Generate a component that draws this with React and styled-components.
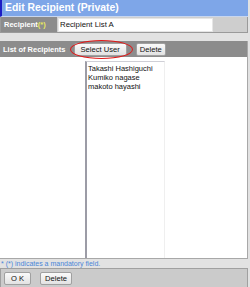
import React from "react";
import styled, { createGlobalStyle } from "styled-components";

const Global = createGlobalStyle`
  html, body {
    margin: 0;
    padding: 0;
    background: #e2e2e2;
  }
  body {
    font-family: "Liberation Sans", Arial, sans-serif;
  }
`;

const Page = styled.div`
  width: 250px;
  height: 287px;
  background: #e2e2e2;
  display: flex;
  flex-direction: column;
`;

const Panel = styled.div`
  width: 248px;
  display: flex;
  flex-direction: column;
`;

const TitleBar = styled.div`
  height: 16px;
  background: #7ea6e8;
  border-left: 2px solid #1c1cc4;
  border-bottom: 1px solid #c8d6ee;
  color: #fff;
  font-weight: bold;
  font-size: 10.4px;
  line-height: 16px;
  padding-left: 3px;
  white-space: nowrap;
`;

const FieldRow = styled.div`
  display: flex;
  height: 15px;
  border: 1px solid #9a9a9a;
  border-top: none;
  background: #cecece;
`;

const LabelCell = styled.div`
  width: 53px;
  background: #8c8c8c;
  color: #fff;
  font-weight: bold;
  font-size: 7.5px;
  line-height: 15px;
  padding-left: 3px;
  white-space: nowrap;
`;

const Mandatory = styled.span`
  color: #e8e860;
`;

const InputCell = styled.div`
  flex: 1;
  display: flex;
  align-items: center;
  padding-left: 1px;
`;

const TextInput = styled.div`
  width: 152px;
  height: 12px;
  background: #fff;
  border: 1px solid #e6e6e6;
  font-size: 7.8px;
  line-height: 12px;
  padding-left: 1px;
  color: #111;
  white-space: nowrap;
`;

const Spacer = styled.div`
  height: ${(p) => p.h}px;
`;

const Section = styled.div`
  display: flex;
  flex-direction: column;
  border-right: 1px solid #a8a8a8;
  border-bottom: 1px solid #a8a8a8;
`;

const SectionHeader = styled.div`
  height: 16px;
  background: #8c8c8c;
  display: flex;
  align-items: center;
  padding-left: 3px;
  gap: 8px;
`;

const HeaderLabel = styled.span`
  color: #fff;
  font-weight: bold;
  font-size: 7.5px;
  white-space: nowrap;
`;

const ButtonGroup = styled.div`
  display: flex;
  align-items: center;
  gap: 9px;
`;

const Highlight = styled.div`
  position: relative;
  display: flex;
  &::after {
    content: "";
    position: absolute;
    left: -4px;
    right: -6px;
    top: -3px;
    bottom: -3px;
    border: 1.5px solid #e01818;
    border-radius: 50%;
  }
`;

const Button = styled.button`
  height: 13px;
  padding: 0 ${(p) => p.px || 4}px;
  font-family: "Liberation Sans", Arial, sans-serif;
  font-size: 7.6px;
  line-height: 11px;
  color: #111;
  background: linear-gradient(#fafafa, #e2e2e2);
  border: 1px solid #a0a0a0;
  border-radius: 2px;
  white-space: nowrap;
`;

const SectionBody = styled.div`
  height: 197px;
  background: #fff;
  display: flex;
  padding-top: 4px;
  padding-left: 85px;
`;

const ListBox = styled.div`
  width: 76px;
  border-left: 2px solid #9c9ca6;
  border-top: 1px solid #cfcfd6;
  border-right: 1px solid #efefef;
  padding: 2px 0 0 1px;
  display: flex;
  flex-direction: column;
`;

const ListItem = styled.div`
  font-size: 7.5px;
  line-height: 9px;
  color: #111;
  white-space: nowrap;
`;

const Note = styled.div`
  height: 9px;
  font-size: 7px;
  line-height: 9px;
  color: #4a86d8;
  padding-left: 1px;
  white-space: nowrap;
`;

const ButtonBar = styled.div`
  height: 18px;
  background: #cbcbcb;
  border: 1px solid #a0a0a0;
  display: flex;
  align-items: center;
  padding-left: 3px;
  gap: 9px;
`;

const recipients = ["Takashi Hashiguchi", "Kumiko nagase", "makoto hayashi"];

export default function App() {
  return (
    <Page>
      <Global />
      <Panel>
        <TitleBar>Edit Recipient (Private)</TitleBar>
        <FieldRow>
          <LabelCell>
            Recipient<Mandatory>(*)</Mandatory>
          </LabelCell>
          <InputCell>
            <TextInput>Recipient List A</TextInput>
          </InputCell>
        </FieldRow>
        <Spacer h={8} />
        <Section>
          <SectionHeader>
            <HeaderLabel>List of Recipients</HeaderLabel>
            <ButtonGroup>
              <Highlight>
                <Button px={6}>Select User</Button>
              </Highlight>
              <Button px={3}>Delete</Button>
            </ButtonGroup>
          </SectionHeader>
          <SectionBody>
            <ListBox>
              {recipients.map((name) => (
                <ListItem key={name}>{name}</ListItem>
              ))}
            </ListBox>
          </SectionBody>
        </Section>
        <Note>* (*) indicates a mandatory field.</Note>
        <ButtonBar>
          <Button px={6}>O K</Button>
          <Button px={4}>Delete</Button>
        </ButtonBar>
      </Panel>
    </Page>
  );
}
